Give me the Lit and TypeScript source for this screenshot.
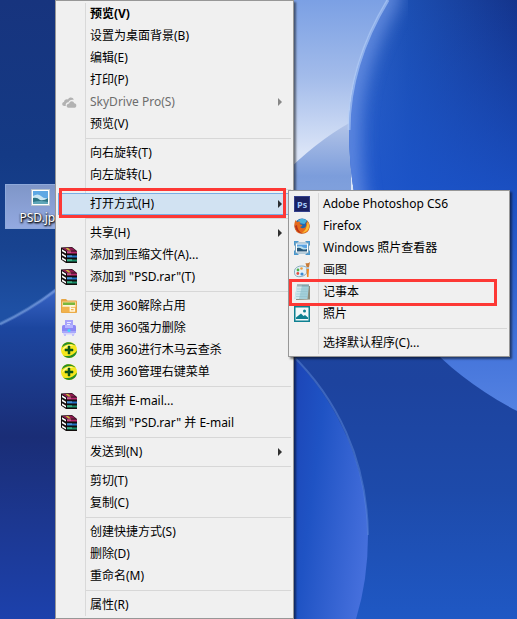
import { LitElement, html, svg, css, nothing } from "lit";
import type { SVGTemplateResult, TemplateResult } from "lit";
import { customElement, property } from "lit/decorators.js";
import { classMap } from "lit/directives/class-map.js";

interface Item {
  label: string;
  icon?: string;
  bold?: boolean;
  disabled?: boolean;
  active?: boolean;
  marked?: boolean;
  arrow?: boolean;
  submenu?: Item[][];
}

const ICONS: Record<string, SVGTemplateResult> = {
  cloud: svg`
    <path d="M3.500 12C.6 12 .5 8.500 3 8 3.200 5.400 5.600 4.600 7 5.600 8.200 2.800 12.200 3 12.700 6 9.800 5.400 8 7 7.500 8.300 5.200 8.400 4.300 10.200 4.800 12Z" fill="#b2b2b2"/>
    <path d="M7.500 13.700C4.800 13.500 5.200 9.800 8.200 9.600 8.700 6.600 12.600 6.400 13.200 9.300 16 9.200 15.900 13.600 13.700 13.700Z" fill="#b2b2b2"/>`,
  rar: svg`
    <path d="M0 .5 11 0 16 4V16H5L0 12.500Z" fill="#120d0c"/>
    <path d="M1 1 10.500 .500 15 3.500 5.500 4Z" fill="#8f1b52"/>
    <path d="M4.500 1h2.500l3 2.500H7.500Z" fill="#c8b93a"/>
    <path d="M6 4.500H16v2H6Z" fill="#b8286f"/>
    <path d="M6 4.500h4v1H6Z" fill="#e080b0"/>
    <path d="M1 2.200 5 4.700v1.800L1 4.200Z" fill="#fff"/>
    <path d="M6 8.500H16v2H6Z" fill="#1f70c4"/>
    <path d="M6 8.500h5v1H6Z" fill="#66b5ee"/>
    <path d="M1 6.200 5 8.700v1.800L1 8.200Z" fill="#fff"/>
    <path d="M6 12.500H16v2H6Z" fill="#178a66"/>
    <path d="M6 12.500h5v1H6Z" fill="#56d8a8"/>
    <path d="M1 10.200 5 12.700v1.800L1 12.200Z" fill="#fff"/>`,
  folder: svg`
    <path d="M0 2q0-1 1-1h4l1.500 1.500H15q1 0 1 1V14q0 1-1 1H1q-1 0-1-1Z" fill="#e5a544"/>
    <path d="M1 3.500h14v10.500H1Z" fill="#f8d58a"/>
    <path d="M2 4.500h12v3.500H2Z" fill="#78b73c"/>
    <path d="M2 7h12v1.500H2Z" fill="#f9f4d8"/>
    <path d="M1 9h14v5.500H1Z" fill="#f1b24c"/>
    <path d="M13.300 8H9.300V13h4V10.400H9.300" fill="none" stroke="#fff5dc" stroke-width="1.400"/>`,
  shredder: svg`
    <path d="M4 0h8v7H4Z" fill="#a7a2fb"/>
    <path d="M6 2h4v1H6Zm0 2h3v1H6Z" fill="#e8e8ff"/>
    <rect x="1" y="5" width="14" height="8" rx="1.500" fill="#8d87f5"/>
    <path d="M4 5h8v3H4Z" fill="#b6b4ff"/>
    <path d="M1 11h14v2H1Z" fill="#a8a8fb"/>
    <circle cx="8" cy="10.500" r="1.500" fill="#3fd6ff"/>
    <path d="M2 13h12v1.500H2Z" fill="#d3d2fb"/>
    <path d="M3 14h2v2H3Zm8 0h2v2h-2Z" fill="#c4c2fb"/>`,
  shield: svg`
    <circle cx="8" cy="8" r="8" fill="#f4e61c"/>
    <path d="M1 5.500C2-.8 11-1.500 14.800 3.800 10 .8 5 1.800 1 5.500Z" fill="#268d2a"/>
    <path d="M16 8.500C15.500 15.800 7 18.300 2.200 13.500 8 15.200 13 13 16 8.500Z" fill="#268d2a"/>
    <path d="M1 9C3 3 8 2 13 4 8 3.500 4 5 1 9Z" fill="#fffb9c"/>
    <path d="M7 4h2v3h3v2H9v3H7V9H4V7h3Z" fill="#0a5418" stroke="#0a5418" stroke-width=".5"/>`,
  photoshop: svg`
    <rect x=".5" y=".5" width="15" height="15" fill="#1b2262" stroke="#33408b"/>
    <text x="3" y="11.500" class="ps">Ps</text>`,
  firefox: svg`
    <circle cx="8" cy="8" r="7.500" fill="#2566ab"/>
    <path d="M4 2.500Q8-1 13 2.500L10.500 6 5 5Z" fill="#4ab2dc"/>
    <path d="M1.500 2 3 4Q5 3 6.500 4L5.500 6 8.500 7.200Q7.500 8.800 6 9 8.500 11.300 11 9.500 13 7.500 11.500 4 13 4.500 13.500 6 13.500 4 12.500 2 16 5 15.700 9 15 15.500 8 15.800 1 15.500 .3 8 .3 4.500 1.500 2Z" fill="#e66a1c"/>
    <path d="M13.500 3.500Q16 7 14.500 11 12 15 8 14.800 13 12 13.500 3.500Z" fill="#f9bd31"/>
    <path d="M1 8Q2 14.500 8 15.500 3 12 3 7Z" fill="#b83218"/>`,
  viewer: svg`
    <path d="M0 1h5L0 6Zm16 0v5l-5-5ZM0 15v-5l5 5Zm16 0h-5l5-5Z" fill="#4a98cf"/>
    <rect x="1.500" y="3" width="13" height="10" fill="#fff" stroke="#7aa3bd"/>
    <path d="M3 4.500h10v4H3Z" fill="#5aa3e2"/>
    <path d="M3 6.500q5-1 6 1l4 1v2H3Z" fill="#bfe1ec"/>
    <path d="M3 8q2-1 5 1 2 1 5 0v2.500H3Z" fill="#28577a"/>`,
  paint: svg`
    <path d="M.5 10C0 5 6 3 11 4.500 14 5.500 12 8 13 10 12 14.500 4 16 1.500 13.500.5 12.500.5 11 .5 10Z" fill="#e4f0f7" stroke="#87aabb"/>
    <circle cx="4" cy="8" r="1.400" fill="#4fae49"/><circle cx="7.500" cy="6.500" r="1.300" fill="#eb9b3d"/>
    <circle cx="3.800" cy="11.500" r="1.400" fill="#e15144"/><circle cx="8" cy="12" r="1.600" fill="#3e8bd0"/>
    <path d="M11.500 1Q14 2 16 0L15 5h-2.500Z" fill="#c77b38"/>
    <path d="M12.500 5H15v2h-2.500Z" fill="#b9c3c8"/><path d="M12.500 7H15l-.5 8h-1.500Z" fill="#ee8a25"/>`,
  notepad: svg`
    <path d="M4 2h12v13.500L2 16Z" fill="#8c8a78"/>
    <path d="M3 1h12L13.500 15H.5Z" fill="#a3cfd9"/>
    <path d="M3 1h5L5 15H.5Z" fill="#cfe8ed"/>
    <path d="M3 5h11M2.700 7.500h11M2.300 10h11M2 12.500h11" stroke="#8cbcc8" stroke-width=".5"/>
    <path d="M4 0v2.500M6 0v2.500M8 0v2.500M10 0v2.500M12 0v2.500M14 0v2.500" stroke="#52676d" stroke-width=".8"/>`,
  photos: svg`
    <rect x=".75" y=".75" width="14.500" height="14.500" fill="#f2f8f9" stroke="#0e8091" stroke-width="1.500"/>
    <path d="M2 13V11.500L7 7.500l2.500 2.500L11 9l3 2.500V13Z" fill="#0e8091"/>
    <circle cx="10.500" cy="5" r="1.500" fill="#0e8091"/>`,
};

const OPEN_WITH: Item[][] = [
  [
    { label: "Adobe Photoshop CS6", icon: "photoshop" },
    { label: "Firefox", icon: "firefox" },
    { label: "Windows 照片查看器", icon: "viewer" },
    { label: "画图", icon: "paint" },
    { label: "记事本", icon: "notepad", marked: true },
    { label: "照片", icon: "photos" },
  ],
  [{ label: "选择默认程序(C)..." }],
];

const FILE_MENU: Item[][] = [
  [
    { label: "预览(V)", bold: true },
    { label: "设置为桌面背景(B)" },
    { label: "编辑(E)" },
    { label: "打印(P)" },
    { label: "SkyDrive Pro(S)", icon: "cloud", disabled: true, arrow: true },
    { label: "预览(V)" },
  ],
  [{ label: "向右旋转(T)" }, { label: "向左旋转(L)" }],
  [{ label: "打开方式(H)", active: true, marked: true, arrow: true, submenu: OPEN_WITH }],
  [
    { label: "共享(H)", arrow: true },
    { label: "添加到压缩文件(A)...", icon: "rar" },
    { label: '添加到 "PSD.rar"(T)', icon: "rar" },
  ],
  [
    { label: "使用 360解除占用", icon: "folder" },
    { label: "使用 360强力删除", icon: "shredder" },
    { label: "使用 360进行木马云查杀", icon: "shield" },
    { label: "使用 360管理右键菜单", icon: "shield" },
  ],
  [
    { label: "压缩并 E-mail...", icon: "rar" },
    { label: '压缩到 "PSD.rar" 并 E-mail', icon: "rar" },
  ],
  [{ label: "发送到(N)", arrow: true }],
  [{ label: "剪切(T)" }, { label: "复制(C)" }],
  [{ label: "创建快捷方式(S)" }, { label: "删除(D)" }, { label: "重命名(M)" }],
  [{ label: "属性(R)" }],
];

@customElement("context-menu")
export class ContextMenu extends LitElement {
  @property({ attribute: false }) groups: Item[][] = [];

  static styles = css`
    :host {
      display: block;
      box-sizing: border-box;
      background: #f0f0f0;
      border: 1px solid #979797;
      box-shadow: 2px 2px 2px rgba(0, 0, 0, 0.5);
      padding: 2px 0;
    }
    ul {
      list-style: none;
      margin: 0;
      padding: 0;
      background: linear-gradient(#d9d9d9, #d9d9d9) 29px 0 / 1px 100% no-repeat;
    }
    .row {
      position: relative;
      padding: 0 2px;
    }
    .separator {
      height: 1px;
      margin: 3px 2px 3px 30px;
      background: #d7d7d7;
    }
    .item {
      display: flex;
      align-items: center;
      box-sizing: border-box;
      width: 100%;
      height: 22px;
      padding: 0 9px 0 3px;
      border: 0;
      background: none;
      color: #000;
      font: inherit;
      text-align: left;
      white-space: nowrap;
    }
    .item.bold {
      font-weight: 700;
    }
    .item.disabled {
      color: #6d6d6d;
    }
    .item.active {
      background: #d1e2f2;
      box-shadow: inset 0 0 0 1px #78aee5;
    }
    .icon {
      flex: none;
      width: 16px;
      height: 16px;
      margin-right: 13px;
    }
    .ps {
      font: 700 9px "Open Sans", sans-serif;
      fill: #a5c8f5;
    }
    .label {
      flex: 1;
    }
    .arrow {
      width: 4px;
      height: 8px;
      background: currentColor;
      clip-path: polygon(0 0, 100% 50%, 0 100%);
      opacity: 0.8;
    }
    .mark {
      position: absolute;
      inset: -5px 7px -3px 3px;
      border: 3px solid #fd3835;
      pointer-events: none;
    }
    .mark.leaf {
      inset: -2px 12px -3px 0;
    }
    .submenu {
      position: absolute;
      top: -3px;
      left: calc(100% - 5px);
      width: 222px;
    }
  `;

  private renderItem(item: Item): TemplateResult {
    const classes = { item: true, bold: !!item.bold, disabled: !!item.disabled, active: !!item.active };
    return html`
      <li class="row" role="none">
        <button class=${classMap(classes)} role="menuitem" ?disabled=${item.disabled}
          aria-haspopup=${item.arrow ? "menu" : "false"}>
          <svg class="icon" viewBox="0 0 16 16" aria-hidden="true">${item.icon ? ICONS[item.icon] : nothing}</svg>
          <span class="label">${item.label}</span>
          ${item.arrow ? html`<span class="arrow"></span>` : nothing}
        </button>
        ${item.marked ? html`<div class=${classMap({ mark: true, leaf: !item.submenu })}></div>` : nothing}
        ${item.submenu ? html`<context-menu class="submenu" .groups=${item.submenu}></context-menu>` : nothing}
      </li>
    `;
  }

  render() {
    return html`
      <ul role="menu">
        ${this.groups.map(
          (group, i) => html`
            ${i ? html`<li class="separator" role="separator"></li>` : nothing}
            ${group.map((item) => this.renderItem(item))}
          `,
        )}
      </ul>
    `;
  }
}

@customElement("desktop-wallpaper")
export class DesktopWallpaper extends LitElement {
  static styles = css`
    :host,
    svg {
      display: block;
      width: 100%;
      height: 100%;
    }
  `;

  render() {
    return html`
      <svg viewBox="0 0 517 619" preserveAspectRatio="xMidYMid slice" aria-hidden="true">
        <defs>
          <linearGradient id="left" x1="0" y1="0" x2="0" y2="1">
            <stop offset="0" stop-color="#17347e" /><stop offset=".25" stop-color="#143a85" />
            <stop offset=".4" stop-color="#184390" /><stop offset=".5" stop-color="#1e50a4" />
          </linearGradient>
          <linearGradient id="leftBall" x1="0" y1="0" x2="0" y2="1">
            <stop offset="0" stop-color="#3a66c8" /><stop offset=".12" stop-color="#1c469f" />
            <stop offset=".45" stop-color="#1a2d76" /><stop offset=".7" stop-color="#1c3790" />
            <stop offset="1" stop-color="#1c41ac" />
          </linearGradient>
          <linearGradient id="sky" x1="0" y1="0" x2="0" y2="1">
            <stop offset="0" stop-color="#7ba0e4" /><stop offset=".4" stop-color="#a2bbea" />
            <stop offset=".8" stop-color="#dae4f7" />
          </linearGradient>
          <linearGradient id="hill" x1="0" y1="0" x2="0" y2="1">
            <stop offset="0" stop-color="#b4c5e8" /><stop offset=".5" stop-color="#7c9ddb" />
            <stop offset="1" stop-color="#8aa9e0" />
          </linearGradient>
          <linearGradient id="ball" x1="0" y1=".1" x2="1" y2="0">
            <stop offset="0" stop-color="#3468c8" /><stop offset=".35" stop-color="#1c4fb2" />
            <stop offset="1" stop-color="#14348c" />
          </linearGradient>
          <linearGradient id="ballGlow" x1="0" y1="0" x2="0" y2="1">
            <stop offset="0" stop-color="#1b54cc" stop-opacity="0" />
            <stop offset=".45" stop-color="#1b54cc" stop-opacity=".8" />
            <stop offset=".85" stop-color="#4474da" /><stop offset="1" stop-color="#5482e2" />
          </linearGradient>
          <linearGradient id="deep" x1="0" y1="0" x2="0" y2="1">
            <stop offset="0" stop-color="#204a9e" /><stop offset=".45" stop-color="#1d439e" />
            <stop offset=".7" stop-color="#1d4aaa" /><stop offset="1" stop-color="#1f58c4" />
          </linearGradient>
          <linearGradient id="lowBall" x1="0" y1=".3" x2="1" y2=".7">
            <stop offset="0" stop-color="#1b42b4" /><stop offset=".4" stop-color="#1f53c4" />
            <stop offset="1" stop-color="#456fdc" />
          </linearGradient>
          <filter id="soft" x="-50%" y="-10%" width="200%" height="120%">
            <feGaussianBlur stdDeviation="9" />
          </filter>
          <clipPath id="globe">
            <path d="M388 0C365 38 349 82 349 130 349 250 400 350 517 411V0Z" />
          </clipPath>
        </defs>
        <rect width="280" height="619" fill="url(#left)" />
        <path d="M0 325Q28 312 56 288H280V619H0Z" fill="url(#leftBall)" />
        <path d="M0 324Q28 311 56 290" fill="none" stroke="#7a9ede" stroke-width="4" opacity=".3" />
        <path d="M0 324Q28 311 56 290" fill="none" stroke="#7a9ede" stroke-width="2" opacity=".6" />
        <rect x="280" width="237" height="190" fill="url(#sky)" />
        <path d="M280 178Q315 142 351 122V230H280Z" fill="url(#hill)" />
        <rect x="280" y="190" width="237" height="429" fill="url(#deep)" />
        <g clip-path="url(#globe)">
          <rect x="349" width="168" height="411" fill="url(#ball)" />
          <rect x="349" width="168" height="411" fill="url(#ballGlow)" />
          <path d="M388-20V0C365 38 349 82 349 130 349 160 350 190 360 230" fill="none" stroke="#7ea0ec"
            stroke-width="22" opacity=".7" filter="url(#soft)" />
        </g>
        <path d="M388 0C365 38 349 82 349 130" fill="none" stroke="#b4cef8" stroke-width="3" opacity=".6" />
        <path d="M280 345C332 390 367 460 368 535Q368 580 356 619H280Z" fill="url(#lowBall)" />
        <path d="M290 353C337 398 367 460 368 535" fill="none" stroke="#5b88dc" stroke-width="2" opacity=".5" />
      </svg>
    `;
  }
}

@customElement("app-root")
export class AppRoot extends LitElement {
  static styles = css`
    :host {
      display: flow-root;
      position: relative;
      min-height: 100vh;
      overflow: hidden;
      font: 12px/16px "Noto Sans", "Noto Sans CJK SC", sans-serif;
    }
    .wallpaper {
      position: absolute;
      inset: 0;
    }
    .file {
      position: absolute;
      top: 184px;
      left: 5px;
      display: flex;
      flex-direction: column;
      align-items: center;
      gap: 3px;
      box-sizing: border-box;
      width: 72px;
      padding: 4px 0 2px;
      border: 1px solid #8fa9da;
      background: linear-gradient(#7f96c8, #93a9e0);
      color: #fff;
      font: inherit;
      text-shadow: 1px 1px 2px #000, 0 1px 2px #000;
    }
    .thumb {
      width: 20px;
      height: 18px;
    }
    .menu {
      position: relative;
      width: 239px;
      margin-left: 55px;
    }
  `;

  render() {
    return html`
      <desktop-wallpaper class="wallpaper"></desktop-wallpaper>
      <button class="file">
        <svg class="thumb" viewBox="0 0 20 18" aria-hidden="true">
          <rect x=".5" y=".5" width="18" height="16" fill="#fff" stroke="#b9c3cc" />
          <path d="M2 2h15v8H2Z" fill="#5ea8e4" />
          <path d="M2 7q5-3 8 0t7 2v3H2Z" fill="#c9e6f3" />
          <path d="M2 9q4-1 7 2 4 1 8-2v6H2Z" fill="#2c7484" />
          <path d="M2 13q7-2 15 0v2H2Z" fill="#5fa6b8" />
        </svg>
        <span>PSD.jpg</span>
      </button>
      <context-menu class="menu" .groups=${FILE_MENU}></context-menu>
    `;
  }
}
